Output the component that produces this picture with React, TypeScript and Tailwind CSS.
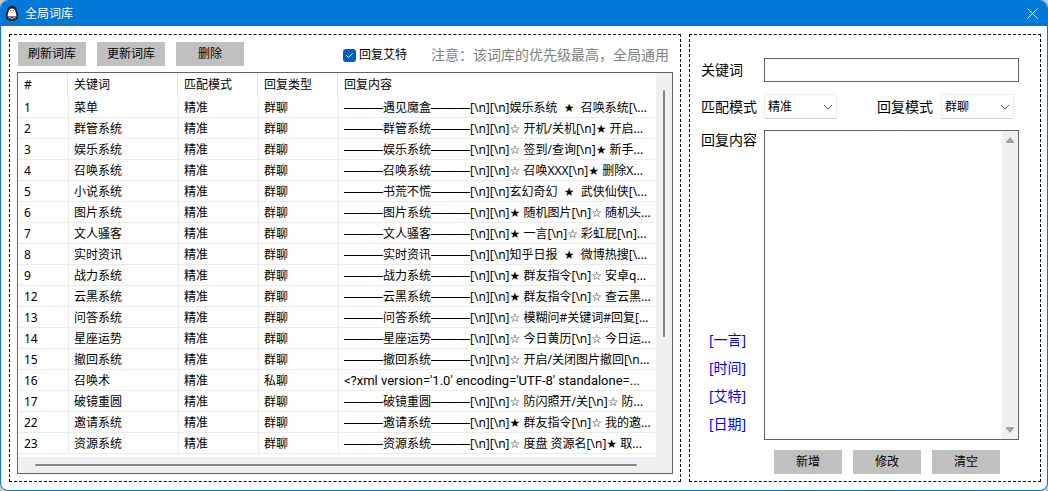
import React from 'react';

type Entry = { id: number; keyword: string; type: string; title?: string; text: string };

const entries: Entry[] = [
  { id: 1, keyword: '菜单', type: '群聊', title: '遇见魔盒', text: '[\\n][\\n]娱乐系统  ★  召唤系统[\\...' },
  { id: 2, keyword: '群管系统', type: '群聊', title: '群管系统', text: '[\\n][\\n]☆ 开机/关机[\\n]★ 开启...' },
  { id: 3, keyword: '娱乐系统', type: '群聊', title: '娱乐系统', text: '[\\n][\\n]☆ 签到/查询[\\n]★ 新手...' },
  { id: 4, keyword: '召唤系统', type: '群聊', title: '召唤系统', text: '[\\n][\\n]☆ 召唤XXX[\\n]★ 删除X...' },
  { id: 5, keyword: '小说系统', type: '群聊', title: '书荒不慌', text: '[\\n][\\n]玄幻奇幻  ★  武侠仙侠[\\...' },
  { id: 6, keyword: '图片系统', type: '群聊', title: '图片系统', text: '[\\n][\\n]★ 随机图片[\\n]☆ 随机头...' },
  { id: 7, keyword: '文人骚客', type: '群聊', title: '文人骚客', text: '[\\n][\\n]★ 一言[\\n]☆ 彩虹屁[\\n]...' },
  { id: 8, keyword: '实时资讯', type: '群聊', title: '实时资讯', text: '[\\n][\\n]知乎日报  ★  微博热搜[\\...' },
  { id: 9, keyword: '战力系统', type: '群聊', title: '战力系统', text: '[\\n][\\n]★ 群友指令[\\n]☆ 安卓q...' },
  { id: 12, keyword: '云黑系统', type: '群聊', title: '云黑系统', text: '[\\n][\\n]★ 群友指令[\\n]☆ 查云黑...' },
  { id: 13, keyword: '问答系统', type: '群聊', title: '问答系统', text: '[\\n][\\n]☆ 模糊问#关键词#回复[...' },
  { id: 14, keyword: '星座运势', type: '群聊', title: '星座运势', text: '[\\n][\\n]☆ 今日黄历[\\n]☆ 今日运...' },
  { id: 15, keyword: '撤回系统', type: '群聊', title: '撤回系统', text: '[\\n][\\n]☆ 开启/关闭图片撤回[\\n...' },
  { id: 16, keyword: '召唤术', type: '私聊', text: "<?xml version='1.0' encoding='UTF-8' standalone=..." },
  { id: 17, keyword: '破镜重圆', type: '群聊', title: '破镜重圆', text: '[\\n][\\n]☆ 防闪照开/关[\\n]☆ 防...' },
  { id: 22, keyword: '邀请系统', type: '群聊', title: '邀请系统', text: '[\\n][\\n]★ 群友指令[\\n]☆ 我的邀...' },
  { id: 23, keyword: '资源系统', type: '群聊', title: '资源系统', text: '[\\n][\\n]☆ 度盘 资源名[\\n]★ 取...' },
];

const variables = ['[一言]', '[时间]', '[艾特]', '[日期]'];

function PushButton({ children }: { children: React.ReactNode }) {
  return <button type="button" className="h-6 w-[68px] shrink-0 bg-[#c0c0c0] text-xs">{children}</button>;
}

function Dashes() {
  return <span className="font-['Liberation_Sans',sans-serif] text-[13px]">———</span>;
}

function Select({ id, options }: { id: string; options: string[] }) {
  return (
    <div className="grid w-[73px] items-center">
      <select
        id={id}
        className="col-start-1 row-start-1 h-[25px] w-full appearance-none rounded-xs border border-[#ececec] border-b-[#d0d0d0] bg-white pl-[3px] text-xs"
      >
        {options.map((o) => <option key={o}>{o}</option>)}
      </select>
      <svg className="pointer-events-none col-start-1 row-start-1 mr-1 h-[10px] w-[10px] justify-self-end" viewBox="0 0 10 10" fill="none" stroke="#606060">
        <path d="M1 3l4 4 4-4" />
      </svg>
    </div>
  );
}

function PenguinIcon() {
  return (
    <svg className="h-[17px] w-[14px]" viewBox="0 0 14 17">
      <path d="M7 .8C3.800.8 2.500 3 2.200 5.500 1.300 7 .8 8.800.8 11c0 3.300 2.400 5.200 6.200 5.200s6.200-1.900 6.200-5.200c0-2.200-.5-4-1.400-5.500C11.500 3 10.200.8 7 .8z" fill="#1b1a2b" />
      <path d="M7 3.500C4.700 3.500 3.700 5 3.500 7c-.6 1.200-.9 2.400-.9 3.800 0 2 1.600 3.200 4.400 3.200s4.400-1.200 4.400-3.200c0-1.400-.3-2.600-.9-3.800C10.300 5 9.300 3.500 7 3.500z" fill="#fff" />
      <path d="M5.200 5h1v1.200h-1zM7.800 5h1v1.200h-1z" fill="#555" />
      <path d="M5.800 7h2.400L7 8.200z" fill="#f0a840" />
      <path d="M2.800 11.200h8.400v3.300H2.800z" fill="#4d4d55" />
      <path d="M3.800 12.500h1.700M6.200 13.500h1.600M8.500 12.500h1.700" stroke="#c8c8c8" strokeWidth=".8" />
    </svg>
  );
}

const headCell = 'h-6 border-r border-[#e5e5e5] pb-0 pl-[6px] text-left font-normal';
const bodyCell = 'h-[21px] overflow-hidden border-b border-l border-[#ececec] pt-[2px] pl-[5px]';

export default function App() {
  return (
    <div className="flex min-h-screen bg-[#c8c8c8] font-['Noto_Sans','DejaVu_Sans','Noto_Sans_CJK_SC',sans-serif] text-black">
      <div className="flex min-w-0 flex-1 flex-col overflow-hidden rounded-lg border border-[#0078d7] bg-white">
        <header className="flex h-[25px] shrink-0 items-center justify-between bg-[#0078d7] pr-[9px] pl-1 text-white">
          <div className="flex items-center gap-[6px]">
            <PenguinIcon />
            <h1 className="text-xs">全局词库</h1>
          </div>
          <button type="button" aria-label="关闭">
            <svg className="h-[11px] w-[11px]" viewBox="0 0 11 11" stroke="#fff" fill="none">
              <path d="M.5.5l10 10M10.500.5l-10 10" />
            </svg>
          </button>
        </header>

        <main className="flex flex-1 gap-2 p-2 pr-[6px]">
          <section className="flex min-w-0 flex-1 flex-col gap-[6px] border border-dashed border-black p-[7px]">
            <div className="flex items-center justify-between pr-1 pl-px">
              <div className="flex gap-[11px]">
                <PushButton>刷新词库</PushButton>
                <PushButton>更新词库</PushButton>
                <PushButton>删除</PushButton>
              </div>
              <div className="flex h-6 items-center gap-6 pt-[2px]">
                <label className="flex items-center gap-[3px] text-xs">
                  <span className="grid h-[13px] w-[13px]">
                    <input type="checkbox" defaultChecked className="col-start-1 row-start-1 h-[13px] w-[13px] appearance-none rounded-[3px] bg-[#005fb8]" />
                    <svg className="pointer-events-none col-start-1 row-start-1" viewBox="0 0 13 13" fill="none" stroke="#fff">
                      <path d="M3.500 6.500l2 2 4-4" />
                    </svg>
                  </span>
                  回复艾特
                </label>
                <p className="text-sm leading-5 whitespace-nowrap text-[#808080]">注意：该词库的优先级最高，全局通用</p>
              </div>
            </div>

            <div className="grid flex-1 grid-cols-[minmax(0,1fr)_16px] grid-rows-[1fr_16px] border border-[#646464] bg-[#f0f0f0]">
              <div className="bg-white pr-px">
                <table className="w-full table-fixed border-separate border-spacing-0 text-xs leading-4 whitespace-pre">
                  <colgroup>
                    <col className="w-[50px]" />
                    <col className="w-[110px]" />
                    <col className="w-[80px]" />
                    <col className="w-[80px]" />
                    <col />
                  </colgroup>
                  <thead>
                    <tr>
                      <th className={headCell}>#</th>
                      <th className={headCell}>关键词</th>
                      <th className={headCell}>匹配模式</th>
                      <th className={headCell}>回复类型</th>
                      <th className="h-6 pl-[6px] text-left font-normal">回复内容</th>
                    </tr>
                  </thead>
                  <tbody>
                    {entries.map((e) => (
                      <tr key={e.id}>
                        <td className="h-[21px] border-b border-[#ececec] pt-[2px] pl-[6px]">{e.id}</td>
                        <td className={bodyCell}>{e.keyword}</td>
                        <td className={bodyCell}>精准</td>
                        <td className={bodyCell}>{e.type}</td>
                        <td className={bodyCell}>
                          {e.title ? (
                            <><Dashes />{e.title}<Dashes />{e.text}</>
                          ) : (
                            <span className="font-[Roboto,sans-serif] text-[13px]">{e.text}</span>
                          )}
                        </td>
                      </tr>
                    ))}
                  </tbody>
                </table>
              </div>
              <div className="flex justify-center pt-[17px]">
                <div className="h-[247px] w-[2px] rounded-full bg-[#868686]" />
              </div>
              <div className="flex items-center pr-[19px] pl-[17px]">
                <div className="h-[2px] flex-1 rounded-full bg-[#868686]" />
              </div>
            </div>
          </section>

          <section className="flex w-[352px] shrink-0 flex-col border border-dashed border-black pt-[23px] pr-[21px] pb-[7px] pl-[11px]">
            <div className="flex items-center text-sm">
              <label htmlFor="keyword" className="w-[63px]">关键词</label>
              <input id="keyword" type="text" className="h-6 min-w-0 flex-1 border border-[#646464] px-1" />
            </div>
            <div className="mt-3 flex items-center text-sm">
              <label htmlFor="match" className="w-[63px]">匹配模式</label>
              <Select id="match" options={['精准', '模糊']} />
              <label htmlFor="mode" className="ml-10 w-16">回复模式</label>
              <Select id="mode" options={['群聊', '私聊']} />
            </div>
            <div className="mt-[11px] flex flex-1 text-sm">
              <div className="flex w-[63px] flex-col justify-between">
                <label htmlFor="content">回复内容</label>
                <div className="flex flex-col items-start gap-2 pb-[6px] pl-2">
                  {variables.map((v) => (
                    <button key={v} type="button" className="text-[#0000ff]">{v}</button>
                  ))}
                </div>
              </div>
              <div className="flex min-w-0 flex-1 border border-[#646464]">
                <textarea id="content" className="min-w-0 flex-1 resize-none p-1 outline-none" />
                <div className="flex w-4 flex-col items-center justify-between bg-[#f0f0f0] py-[5px]">
                  <svg className="h-2 w-2" viewBox="0 0 8 8"><path d="M4 1l4 5v1H0V6z" fill="#a3a3a3" /></svg>
                  <svg className="h-2 w-2" viewBox="0 0 8 8"><path d="M4 7l4-5V1H0v1z" fill="#a3a3a3" /></svg>
                </div>
              </div>
            </div>
            <div className="mt-[10px] flex justify-end gap-[11px] pr-[19px]">
              <PushButton>新增</PushButton>
              <PushButton>修改</PushButton>
              <PushButton>清空</PushButton>
            </div>
          </section>
        </main>
      </div>
    </div>
  );
}
